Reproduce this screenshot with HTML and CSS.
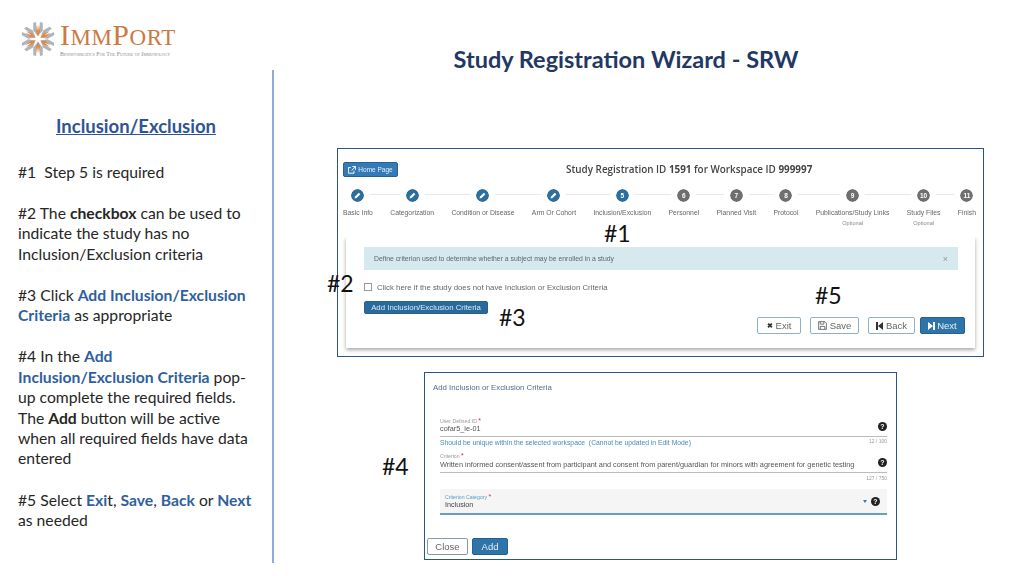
FILE: index.html
```html
<!DOCTYPE html>
<html lang="en">
<head>
    <meta charset="UTF-8">
    <meta name="viewport" content="width=device-width, initial-scale=1.0">
    <title>Study Registration Wizard - SRW</title>
    <link rel="stylesheet" href="styles.css">
</head>
<body>
    <svg class="defs" width="0" height="0">
        <defs>
            <g id="pencil"><circle cx="8" cy="8" r="8" fill="#2b6f9f"/><path d="M4.3 11.7l.7-2.6 4.6-4.6 1.9 1.9-4.6 4.6z" fill="#fff"/></g>
            <g id="petal">
                <path d="M0 -3L-5 -9L-5 -17L-2 -18L-1.5 -10L0 -8L1.5 -10L2 -18L5 -17L5 -9Z" fill="#aeb4bb"/>
                <path d="M0 -3L-2.2 -8L-1 -15L0 -8L1 -15L2.2 -8Z" fill="#e08a45"/>
            </g>
        </defs>
    </svg>
    <div class="slide">
        <aside class="side">
            <div class="logo">
                <svg class="logo-mark" viewBox="-20 -20 40 40" width="38" height="38">
                    <use href="#petal"/>
                    <use href="#petal" transform="rotate(60)"/>
                    <use href="#petal" transform="rotate(120)"/>
                    <use href="#petal" transform="rotate(180)"/>
                    <use href="#petal" transform="rotate(240)"/>
                    <use href="#petal" transform="rotate(300)"/>
                    <circle r="2" fill="#fff"/>
                </svg>
                <div class="logo-text">
                    <div class="logo-name">I<small>MM</small>P<small>ORT</small></div>
                    <div class="logo-tag">Bioinformatics For The Future of Immunology</div>
                </div>
            </div>
            <div class="notes">
                <h2>Inclusion/Exclusion</h2>
                <p>#1&nbsp; Step 5 is required</p>
                <p>#2 The <b>checkbox</b> can be used to<br>indicate the study has no<br>Inclusion/Exclusion criteria</p>
                <p>#3 Click <b class="blue">Add Inclusion/Exclusion<br>Criteria</b> as appropriate</p>
                <p>#4 In the <b class="blue">Add<br>Inclusion/Exclusion Criteria</b> pop-<br>up complete the required fields.<br>The <b>Add</b> button will be active<br>when all required fields have data<br>entered</p>
                <p>#5 Select <b class="blue">Exi</b>t, <b class="blue">Save</b>, <b class="blue">Back</b> or <b class="blue">Next</b><br>as needed</p>
            </div>
        </aside>

        <main class="content">
            <h1>Study Registration Wizard - SRW</h1>

            <section class="shot shot-main">
                <div class="shot-head">
                    <button class="btn btn-home">
                        <svg width="8" height="8" viewBox="0 0 10 10"><path d="M7.5 6v3h-7V2h3M5.5.7h4v4M9.2 1L4.5 5.7" fill="none" stroke="#fff" stroke-width="1.2"/></svg>
                        Home Page
                    </button>
                    <div class="study-id">Study Registration ID <b>1591</b> for Workspace ID <b>999997</b></div>
                </div>

                <div class="steps">
                    <div class="step"><svg class="dot" viewBox="0 0 16 16"><use href="#pencil"/></svg><span>Basic Info</span></div>
                    <div class="step"><svg class="dot" viewBox="0 0 16 16"><use href="#pencil"/></svg><span>Categorization</span></div>
                    <div class="step"><svg class="dot" viewBox="0 0 16 16"><use href="#pencil"/></svg><span>Condition or Disease</span></div>
                    <div class="step"><svg class="dot" viewBox="0 0 16 16"><use href="#pencil"/></svg><span>Arm Or Cohort</span></div>
                    <div class="step"><i class="dot active">5</i><span>Inclusion/Exclusion</span></div>
                    <div class="step"><i class="dot">6</i><span>Personnel</span></div>
                    <div class="step"><i class="dot">7</i><span>Planned Visit</span></div>
                    <div class="step"><i class="dot">8</i><span>Protocol</span></div>
                    <div class="step"><i class="dot">9</i><span>Publications/Study Links</span><em>Optional</em></div>
                    <div class="step"><i class="dot">10</i><span>Study Files</span><em>Optional</em></div>
                    <div class="step"><i class="dot">11</i><span>Finish</span></div>
                </div>

                <div class="card">
                    <div class="alert"><span>Define criterion used to determine whether a subject may be enrolled in a study</span><span class="alert-x">×</span></div>
                    <label class="check"><i class="box"></i>Click here if the study does not have Inclusion or Exclusion Criteria</label>
                    <button class="btn btn-add">Add Inclusion/Exclusion Criteria</button>
                    <div class="actions">
                        <button class="btn btn-line btn-exit"><b class="ico">✖</b>Exit</button>
                        <button class="btn btn-line btn-save"><svg width="9" height="9" viewBox="0 0 10 10"><path d="M.7.7h7l1.6 1.6v7H.7zM2.5 1v2.5h4V1M2.5 9V6h5v3" fill="none" stroke="#555" stroke-width=".9"/></svg>Save</button>
                        <button class="btn btn-line btn-back"><svg width="7" height="8" viewBox="0 0 7 8"><path d="M0 0h2v8H0zM7 0v8L2 4z" fill="#333"/></svg>Back</button>
                        <button class="btn btn-next"><svg width="7" height="8" viewBox="0 0 7 8"><path d="M7 0H5v8h2zM0 0v8l5-4z" fill="#fff"/></svg>Next</button>
                    </div>
                </div>
            </section>

            <section class="shot shot-dialog">
                <div class="dialog-title">Add Inclusion or Exclusion Criteria</div>

                <div class="field field-id">
                    <div class="field-label">User Defined ID <i>*</i></div>
                    <div class="field-row"><span>cofar5_ie-01</span><i class="help">?</i></div>
                </div>
                <div class="field-foot"><span class="hint">Should be unique within the selected workspace&nbsp; (Cannot be updated in Edit Mode)</span><span class="count">12 / 100</span></div>

                <div class="field field-crit">
                    <div class="field-label">Criterion <i>*</i></div>
                    <div class="field-row"><span>Written informed consent/assent from participant and consent from parent/guardian for minors with agreement for genetic testing</span><i class="help">?</i></div>
                </div>
                <div class="field-foot field-foot-tall"><span></span><span class="count">127 / 750</span></div>

                <div class="select">
                    <div>
                        <div class="field-label field-label-blue">Criterion Category <i>*</i></div>
                        <div class="select-value">Inclusion</div>
                    </div>
                    <i class="caret"></i><i class="help">?</i>
                </div>

                <div class="dialog-actions">
                    <button class="btn btn-line btn-big">Close</button>
                    <button class="btn btn-next btn-big">Add</button>
                </div>
            </section>
        </main>

        <span class="tag tag-1">#1</span>
        <span class="tag tag-2">#2</span>
        <span class="tag tag-3">#3</span>
        <span class="tag tag-4">#4</span>
        <span class="tag tag-5">#5</span>
    </div>
</body>
</html>
```

FILE: styles.css
```css
* {
    box-sizing: border-box;
}
html, body {
    margin: 0;
    background-color: #fff;
}
.defs {
    position: absolute;
}
.slide {
    position: relative;
    display: flex;
    width: 1024px;
    height: 576px;
    overflow: hidden;
    font-family: Lato, "Liberation Sans", sans-serif;
    color: #262626;
}

/* left column */
.side {
    width: 274px;
    flex: none;
}
.logo {
    display: flex;
    align-items: flex-start;
    gap: 3px;
    height: 70px;
    padding: 20px 0 0 19px;
}
.logo-mark {
    flex: none;
}
.logo-text {
    width: 118px;
}
.logo-name {
    margin-top: 2px;
    font-family: "Liberation Serif", serif;
    font-size: 29.5px;
    line-height: 26px;
    letter-spacing: .6px;
    color: #cb7a42;
    white-space: nowrap;
}
.logo-name small {
    font-size: 23px;
}
.logo-tag {
    font-family: "Liberation Serif", serif;
    font-size: 5.8px;
    font-variant: small-caps;
    line-height: 6px;
    color: #868b98;
    white-space: nowrap;
}
.notes {
    height: 493px;
    padding: 45px 0 0 18px;
    border-right: 2px solid #8faadc;
    font-size: 15.7px;
    line-height: 20.47px;
}
.notes h2 {
    margin: 0 18px 24.5px 0;
    font-size: 18.5px;
    line-height: 22px;
    font-weight: 700;
    text-align: center;
    text-decoration: underline;
    color: #2f5496;
}
.notes p {
    margin: 0 0 20.6px;
    white-space: nowrap;
}
.blue {
    color: #2f5f9e;
}

/* right column */
.content {
    flex: 1;
    min-width: 0;
}
h1 {
    margin: 0;
    padding: 44px 0 0 84px;
    height: 148px;
    width: 620px;
    font-size: 23.5px;
    line-height: 30px;
    font-weight: 700;
    text-align: center;
    color: #1f3864;
}
.shot {
    background-color: #fff;
    border: 1px solid #2f5488;
    font-family: "Liberation Sans", sans-serif;
    color: #555;
    filter: blur(.3px);
}
.shot-main {
    width: 647px;
    height: 209px;
    margin-left: 63px;
    padding: 13px 7px 0 5px;
}
.shot-dialog {
    width: 473px;
    height: 188px;
    margin: 15px 0 0 150px;
    padding: 10px 9px 0 2px;
}
.btn {
    display: inline-flex;
    align-items: center;
    justify-content: center;
    gap: 2px;
    padding: 0;
    border: 1px solid #286090;
    border-radius: 2px;
    font-family: "Liberation Sans", sans-serif;
}
.btn-home {
    width: 55px;
    height: 15px;
    background-color: #337ab7;
    color: #e8f0f6;
    font-size: 6.5px;
}
.shot-head {
    display: flex;
    height: 27px;
}
.study-id {
    margin: 0 0 0 168px;
    font-family: "Open Sans", sans-serif;
    font-size: 9.9px;
    line-height: 14px;
    font-weight: 600;
    color: #444;
    white-space: nowrap;
}
.study-id b {
    font-weight: 700;
}

/* stepper */
.steps {
    position: relative;
    display: flex;
    justify-content: space-between;
    height: 48px;
}
.steps::before {
    content: "";
    position: absolute;
    left: 10px;
    right: 10px;
    top: 5px;
    height: 1px;
    background-color: #e8e8e8;
}
.step {
    position: relative;
    display: flex;
    flex-direction: column;
    align-items: center;
    font-size: 6.8px;
    line-height: 10px;
    color: #666;
    white-space: nowrap;
}
.step span {
    margin-top: 6px;
}
.step em {
    font-style: normal;
    font-size: 5.6px;
    line-height: 10px;
    color: #888;
}
.dot {
    display: block;
    flex: none;
    width: 13px;
    height: 13px;
    border-radius: 50%;
    outline: 6px solid #fff;
    background-color: #6f6f6f;
    color: #fff;
    font-style: normal;
    font-size: 6.5px;
    font-weight: 700;
    line-height: 13px;
    text-align: center;
}
.dot.active {
    background-color: #2b6f9f;
}

/* card behind the form */
.card {
    position: relative;
    height: 111px;
    margin: 0 1px 0 3px;
    padding: 10px 17px 0 18px;
    background-color: #fff;
    box-shadow: 0 2px 4px rgba(0, 0, 0, 0.35);
    clip-path: inset(0 -8px -8px -8px);
}
.alert {
    display: flex;
    justify-content: space-between;
    align-items: center;
    height: 23px;
    padding: 0 10px;
    background-color: #d5e9ef;
    font-size: 6.85px;
    color: #566a72;
}
.alert-x {
    font-size: 9px;
    color: #999;
}
.check {
    display: flex;
    align-items: center;
    gap: 5px;
    height: 10px;
    margin-top: 12px;
    font-size: 7.8px;
    color: #666;
}
.box {
    width: 8px;
    height: 8px;
    border: 1px solid #999;
    background-color: #fff;
}
.btn-add {
    display: flex;
    width: 124px;
    height: 13px;
    margin-top: 9px;
    background-color: #286a9c;
    color: #dfe9f1;
    font-size: 7.8px;
}
.actions {
    position: absolute;
    right: 10px;
    bottom: 14px;
    display: flex;
    gap: 9px;
}
.btn-line {
    height: 17px;
    gap: 3px;
    background-color: #fff;
    border-color: #8fb0c8;
    color: #666;
    font-size: 9.5px;
    line-height: 1;
}
.btn-exit { width: 44px; }
.btn-save { width: 49px; }
.btn-back { width: 47px; }
.ico {
    font-size: 7px;
    color: #333;
}
.btn-next {
    width: 45px;
    height: 17px;
    margin-left: -4px;
    background-color: #2e74a8;
    color: #e8f0f6;
    font-size: 9.5px;
}

/* dialog */
.dialog-title {
    margin-left: 6px;
    height: 29px;
    font-size: 7.8px;
    line-height: 10px;
    color: #4f6d8c;
}
.field {
    margin-left: 13px;
    border-bottom: 1px solid #bbb;
}
.field-id {
    height: 25px;
    padding-top: 6px;
}
.field-crit {
    height: 22px;
    padding-top: 2px;
}
.field-crit .field-row {
    margin-top: 1px;
}
.field-label {
    font-size: 5.2px;
    line-height: 6px;
    color: #999;
}
.field-label i {
    font-style: normal;
    font-size: 7px;
    color: #c33;
}
.field-label-blue {
    color: #5c9ac4;
}
.field-row {
    display: flex;
    justify-content: space-between;
    align-items: center;
    height: 10px;
    font-size: 7.3px;
    line-height: 10px;
    color: #555;
}
.field-row .help {
    margin-top: -5px;
}
.help {
    display: block;
    flex: none;
    width: 9px;
    height: 9px;
    border-radius: 50%;
    background-color: #222;
    color: #fff;
    font-style: normal;
    font-size: 7px;
    font-weight: 700;
    line-height: 9px;
    text-align: center;
}
.field-foot {
    display: flex;
    justify-content: space-between;
    align-items: flex-start;
    height: 14px;
    margin-left: 13px;
    padding-top: 1px;
}
.field-foot-tall {
    height: 16px;
    padding-top: 2px;
}
.hint {
    font-size: 6.8px;
    line-height: 10px;
    color: #4a8cb8;
}
.count {
    font-size: 5px;
    line-height: 6px;
    color: #999;
}
.select {
    display: flex;
    align-items: center;
    height: 26px;
    margin-left: 13px;
    padding: 0 7px 0 5px;
    background-color: #f5f5f5;
    border-bottom: 2px solid #6b9bc8;
}
.select > div {
    flex: 1;
    align-self: flex-start;
    padding-top: 5px;
}
.select-value {
    font-size: 7.2px;
    line-height: 10px;
    color: #444;
}
.caret {
    width: 0;
    height: 0;
    margin-right: 4px;
    border: 2.5px solid transparent;
    border-top: 3px solid #337ab7;
    border-bottom: 0;
}
.dialog-actions {
    display: flex;
    gap: 4px;
    margin-top: 23px;
}
.btn-big {
    font-size: 9.5px;
    margin-left: 0;
}
.btn-big.btn-line {
    width: 41px;
    border-color: #8a9aa8;
}
.btn-big.btn-next {
    width: 36px;
}

/* annotations sitting over the screenshots */
.tag {
    position: absolute;
    font-size: 23px;
    line-height: 28px;
    color: #111;
}
.tag-1 { left: 604px; top: 219px; }
.tag-2 { left: 327px; top: 269px; }
.tag-3 { left: 499px; top: 303px; }
.tag-4 { left: 382px; top: 452px; }
.tag-5 { left: 815px; top: 281px; }
```
